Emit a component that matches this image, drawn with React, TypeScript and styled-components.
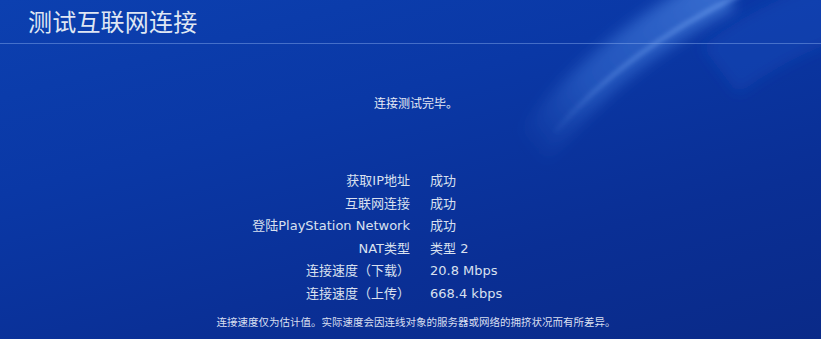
import React from "react";
import styled, { createGlobalStyle } from "styled-components";

const Global = createGlobalStyle`
  html, body { margin: 0; padding: 0; }
  body { background: #0a2e90; }
  * { box-sizing: border-box; }
`;

const Screen = styled.div`
  position: relative;
  width: 821px;
  height: 339px;
  overflow: hidden;
  background: linear-gradient(165deg, #0c40b0 0%, #0a38a6 35%, #0a2f95 70%, #0a2a88 100%);
  font-family: "DejaVu Sans", "Noto Sans CJK SC", sans-serif;
  color: #e2e8f4;
`;

const Decor = styled.svg`
  position: absolute;
  inset: 0;
  pointer-events: none;
`;

const Content = styled.div`
  position: relative;
  display: flex;
  flex-direction: column;
  height: 100%;
`;

const Header = styled.header`
  height: 44px;
  display: flex;
  align-items: center;
  padding-left: 28px;
  border-bottom: 1px solid rgba(140, 175, 240, 0.45);
`;

const Title = styled.h1`
  margin: 0;
  margin-top: -3px;
  font-family: "Noto Sans CJK SC", sans-serif;
  font-weight: 400;
  font-size: 24px;
  color: #dfe6f3;
  letter-spacing: 0.2px;
`;

const Status = styled.p`
  margin: 50px 0 0 0;
  padding-left: 11px;
  text-align: center;
  font-family: "Noto Sans CJK SC", sans-serif;
  font-size: 12px;
  line-height: 18px;
  color: #e6ebf5;
`;

const Results = styled.dl`
  margin: 60px 0 0 0;
  display: grid;
  grid-template-columns: 410px 1fr;
  column-gap: 20px;
  row-gap: 4px;
`;

const Label = styled.dt`
  text-align: right;
  font-size: 13px;
  line-height: 18.5px;
  color: #d9e0ef;
`;

const Value = styled.dd`
  margin: 0;
  font-size: 13px;
  line-height: 18.5px;
  color: #d9e0ef;
`;

const Note = styled.p`
  margin: 12px 0 0 0;
  padding-left: 11px;
  text-align: center;
  font-family: "Noto Sans CJK SC", sans-serif;
  font-size: 10.5px;
  line-height: 14px;
  color: #d8dff0;
`;

const rows: [string, string][] = [
  ["获取IP地址", "成功"],
  ["互联网连接", "成功"],
  ["登陆PlayStation Network", "成功"],
  ["NAT类型", "类型 2"],
  ["连接速度（下载）", "20.8 Mbps"],
  ["连接速度（上传）", "668.4 kbps"],
];

export default function App() {
  return (
    <>
      <Global />
      <Screen>
        <Decor width="821" height="339" viewBox="0 0 821 339">
          <defs>
            <filter id="blur" x="-50%" y="-50%" width="200%" height="200%">
              <feGaussianBlur stdDeviation="7" />
            </filter>
            <filter id="blur2" x="-50%" y="-50%" width="200%" height="200%">
              <feGaussianBlur stdDeviation="2" />
            </filter>
            <linearGradient id="fade" gradientUnits="userSpaceOnUse" x1="530" y1="150" x2="720" y2="0">
              <stop offset="0" stopColor="#4a88e8" stopOpacity="0" />
              <stop offset="0.35" stopColor="#4a88e8" stopOpacity="0.35" />
              <stop offset="1" stopColor="#5a94ee" stopOpacity="0.55" />
            </linearGradient>
            <linearGradient id="fade2" gradientUnits="userSpaceOnUse" x1="540" y1="140" x2="740" y2="0">
              <stop offset="0" stopColor="#7aaaf6" stopOpacity="0" />
              <stop offset="0.4" stopColor="#7aaaf6" stopOpacity="0.3" />
              <stop offset="1" stopColor="#7aaaf6" stopOpacity="0.45" />
            </linearGradient>
          </defs>
          <path d="M 720 70 Q 780 25 850 5" stroke="#1a55c8" strokeOpacity="0.3" strokeWidth="60" fill="none" filter="url(#blur)" />
          <path d="M 528 155 Q 600 55 725 -10" stroke="url(#fade)" strokeWidth="42" fill="none" filter="url(#blur)" />
          <path d="M 555 132 Q 625 50 745 -8" stroke="url(#fade2)" strokeWidth="5" fill="none" filter="url(#blur2)" />
        </Decor>
        <Content>
          <Header>
            <Title>测试互联网连接</Title>
          </Header>
          <Status>连接测试完毕。</Status>
          <Results>
            {rows.map(([k, v]) => (
              <React.Fragment key={k}>
                <Label>{k}</Label>
                <Value>{v}</Value>
              </React.Fragment>
            ))}
          </Results>
          <Note>连接速度仅为估计值。实际速度会因连线对象的服务器或网络的拥挤状况而有所差异。</Note>
        </Content>
      </Screen>
    </>
  );
}
